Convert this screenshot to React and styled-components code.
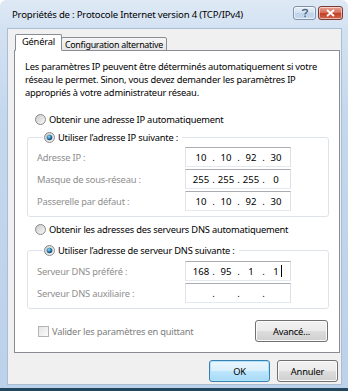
import React from 'react';
import styled, { createGlobalStyle } from 'styled-components';

const GlobalStyle = createGlobalStyle`
  html, body { margin: 0; padding: 0; background: #ffffff; }
  body {
    font-family: "Noto Sans", "DejaVu Sans", sans-serif;
    font-size: 9px;
    letter-spacing: -0.2px;
    color: #000;
  }
  * { box-sizing: border-box; }
`;

const Window = styled.div`
  width: 348px;
  height: 391px;
  display: flex;
  flex-direction: column;
  background: linear-gradient(to bottom, #dfe9f5 0px, #d3e2f2 28px, #c3d7ed 120px, #bcd2ea 100%);
  border-radius: 6px 6px 0 0;
  overflow: hidden;
`;

const TitleBar = styled.div`
  height: 28px;
  flex: none;
  display: flex;
  align-items: center;
  padding: 0 5px 2px 12px;
`;

const Title = styled.div`
  flex: 1;
  font-size: 9.6px;
  color: #000;
  white-space: nowrap;
  padding-top: 3px;
`;

const CaptionButton = styled.div`
  width: ${(p) => p.$w}px;
  height: 14px;
  margin-left: ${(p) => p.$ml || 0}px;
  border: 1px solid ${(p) => (p.$close ? '#7a3a33' : '#7f93ad')};
  border-radius: 3px;
  display: flex;
  align-items: center;
  justify-content: center;
  background: ${(p) =>
    p.$close
      ? 'linear-gradient(to bottom, #e8a294 0%, #d8705d 45%, #c43f27 55%, #d06850 100%)'
      : 'linear-gradient(to bottom, #e8f0f9 0%, #d3e1f1 45%, #bfd2e9 55%, #c9dbee 100%)'};
  box-shadow: inset 0 0 0 1px rgba(255, 255, 255, 0.55);
`;

const Client = styled.div`
  flex: 1;
  margin: 0 6px 0 7px;
  background: #f0f0f0;
  border: 1px solid #a9bdd4;
  display: flex;
  flex-direction: column;
  padding: 4px 1px 0 6px;
`;

const TabRow = styled.div`
  height: 17px;
  display: flex;
  align-items: flex-end;
  position: relative;
  z-index: 1;
  padding-left: 1px;
`;

const Tab = styled.div`
  height: ${(p) => (p.$active ? 17 : 14)}px;
  margin-bottom: -1px;
  padding: 0 ${(p) => (p.$active ? 6 : 3)}px;
  margin-left: ${(p) => (p.$active ? 0 : -1)}px;
  border: 1px solid #898c95;
  border-bottom: ${(p) => (p.$active ? '1px solid #ffffff' : '1px solid #898c95')};
  border-radius: 2px 2px 0 0;
  background: ${(p) => (p.$active ? '#ffffff' : 'linear-gradient(to bottom, #f6f6f6, #e6e6e6)')};
  display: flex;
  align-items: center;
  font-size: ${(p) => (p.$active ? 9.3 : 8.9)}px;
  letter-spacing: ${(p) => (p.$active ? -0.2 : -0.25)}px;
  padding-bottom: ${(p) => (p.$active ? 3 : 0)}px;
  position: relative;
  z-index: ${(p) => (p.$active ? 2 : 1)};
`;

const Panel = styled.div`
  height: 303px;
  background: #ffffff;
  border: 1px solid #898c95;
  padding: 9px 10px 0 10px;
  display: flex;
  flex-direction: column;
`;

const Paragraph = styled.p`
  margin: 0;
  font-size: 9.3px;
  line-height: 13px;
`;

const OptionRow = styled.label`
  display: flex;
  align-items: center;
  gap: 3px;
  height: 14px;
  margin-top: ${(p) => p.$mt || 0}px;
  padding-left: ${(p) => p.$pl || 0}px;
  font-size: 9.3px;
  white-space: nowrap;
`;

const Group = styled.fieldset`
  margin: ${(p) => p.$mt}px 0 0 2px;
  padding: ${(p) => p.$pt}px 0 5px 9px;
  border: 1px solid #dde3e8;
  border-radius: 3px;
  display: flex;
  flex-direction: column;
  gap: 2px;
  min-width: 0;
`;

const Legend = styled.legend`
  margin-left: 6px;
  padding: 0 4px 0 1px;
  height: 14px;
`;

const FieldRow = styled.div`
  display: grid;
  grid-template-columns: 148px 106px;
  align-items: center;
  height: 20px;
`;

const FieldLabel = styled.span`
  color: #8e8e8e;
  font-size: 9.3px;
`;

const IpBox = styled.div`
  height: 20px;
  border: 1px solid;
  border-color: #abadb3 #dbdfe6 #e3e9ef #e2e3ea;
  background: #fff;
  display: flex;
  align-items: center;
  padding-left: 5px;
  font-size: 9.6px;
  letter-spacing: 0;
`;

const Octet = styled.span`
  width: 20px;
  text-align: center;
  position: relative;
`;

const Dot = styled.span`
  width: 5px;
  text-align: center;
`;

const Caret = styled.span`
  position: absolute;
  top: 0px;
  right: 4px;
  width: 1px;
  height: 12px;
  background: #000;
`;

const BottomRow = styled.div`
  display: flex;
  align-items: center;
  justify-content: space-between;
  margin-top: 11px;
  padding: 0 1px 0 13px;
`;

const CheckLabel = styled.span`
  display: flex;
  align-items: center;
  gap: 3px;
  color: #7d7d7d;
  font-size: 9.3px;
`;

const Button = styled.button`
  width: ${(p) => p.$w || 61}px;
  height: 22px;
  padding: 0;
  border: 1px solid ${(p) => (p.$default ? '#3c7fb1' : '#707070')};
  border-radius: 3px;
  background: ${(p) =>
    p.$default
      ? 'linear-gradient(to bottom, #eaf6fd 0%, #d9f0fc 50%, #bee6fd 50%, #a7d9f5 100%)'
      : 'linear-gradient(to bottom, #f2f2f2 0%, #ebebeb 50%, #dddddd 50%, #cfcfcf 100%)'};
  box-shadow: inset 0 0 0 1px ${(p) => (p.$default ? '#a9e4f9' : '#fbfbfb')};
  font-family: "Noto Sans", "DejaVu Sans", sans-serif;
  font-size: 9.3px;
  letter-spacing: -0.2px;
  color: #000;
`;

const DialogButtons = styled.div`
  display: flex;
  justify-content: flex-end;
  gap: 7px;
  margin-top: 7px;
  padding-right: 2px;
`;

const FrameBottom = styled.div`
  height: 3px;
  flex: none;
`;

const Taskbar = styled.div`
  height: 3px;
  flex: none;
  background: #23475e;
`;

function Radio({ checked, id }) {
  return (
    <svg width="11" height="11" viewBox="0 0 11 11">
      <defs>
        <linearGradient id={`rb-${id}`} x1="0" y1="0" x2="1" y2="1">
          <stop offset="0" stopColor="#c9c9c9" />
          <stop offset="1" stopColor="#fafafa" />
        </linearGradient>
        <radialGradient id={`rd-${id}`} cx="0.4" cy="0.35" r="0.7">
          <stop offset="0" stopColor="#8fe0fb" />
          <stop offset="0.5" stopColor="#2f80b4" />
          <stop offset="1" stopColor="#10365a" />
        </radialGradient>
      </defs>
      <circle cx="5.5" cy="5.5" r="5" fill={`url(#rb-${id})`} stroke="#8b8b8b" strokeWidth="1" />
      {checked && <circle cx="5.5" cy="5.5" r="2.8" fill={`url(#rd-${id})`} />}
    </svg>
  );
}

function Checkbox() {
  return (
    <svg width="11" height="11" viewBox="0 0 11 11">
      <defs>
        <linearGradient id="cb" x1="0" y1="0" x2="1" y2="1">
          <stop offset="0" stopColor="#e3e3e3" />
          <stop offset="1" stopColor="#fdfdfd" />
        </linearGradient>
      </defs>
      <rect x="0.5" y="0.5" width="10" height="10" fill="url(#cb)" stroke="#b4b4b4" />
    </svg>
  );
}

function IpField({ value, caret }) {
  const parts = value ? value : ['', '', '', ''];
  return (
    <IpBox>
      {parts.map((p, i) => (
        <React.Fragment key={i}>
          {i > 0 && <Dot>.</Dot>}
          <Octet>
            {p}
            {caret && i === 3 && <Caret />}
          </Octet>
        </React.Fragment>
      ))}
    </IpBox>
  );
}

export default function App() {
  return (
    <>
      <GlobalStyle />
      <Window>
        <TitleBar>
          <Title>Propriétés de : Protocole Internet version 4 (TCP/IPv4)</Title>
          <CaptionButton $w={23}>
            <svg width="8" height="10" viewBox="0 0 8 10">
              <path d="M1.5 3 C1.5 1 6.5 1 6.5 3 C6.5 4.6 4 4.6 4 6.4" fill="none" stroke="#4e6584" strokeWidth="1.4" />
              <rect x="3.3" y="7.6" width="1.5" height="1.5" fill="#4e6584" />
            </svg>
          </CaptionButton>
          <CaptionButton $w={25} $ml={2} $close>
            <svg width="9" height="8" viewBox="0 0 9 8">
              <path d="M1 1 L8 7 M8 1 L1 7" stroke="#ffffff" strokeWidth="1.8" />
            </svg>
          </CaptionButton>
        </TitleBar>
        <Client>
          <TabRow>
            <Tab $active>Général</Tab>
            <Tab>Configuration alternative</Tab>
          </TabRow>
          <Panel>
            <Paragraph>
              Les paramètres IP peuvent être déterminés automatiquement si votre
              <br />
              réseau le permet. Sinon, vous devez demander les paramètres IP
              <br />
              appropriés à votre administrateur réseau.
            </Paragraph>
            <OptionRow $mt={13} $pl={10}>
              <Radio id="a" />
              Obtenir une adresse IP automatiquement
            </OptionRow>
            <Group $mt={4} $pt={3}>
              <Legend>
                <OptionRow>
                  <Radio id="b" checked />
                  Utiliser l’adresse IP suivante :
                </OptionRow>
              </Legend>
              <FieldRow>
                <FieldLabel>Adresse IP :</FieldLabel>
                <IpField value={['10', '10', '92', '30']} />
              </FieldRow>
              <FieldRow>
                <FieldLabel>Masque de sous-réseau :</FieldLabel>
                <IpField value={['255', '255', '255', '0']} />
              </FieldRow>
              <FieldRow>
                <FieldLabel>Passerelle par défaut :</FieldLabel>
                <IpField value={['10', '10', '92', '30']} />
              </FieldRow>
            </Group>
            <OptionRow $mt={5} $pl={10}>
              <Radio id="c" />
              Obtenir les adresses des serveurs DNS automatiquement
            </OptionRow>
            <Group $mt={7} $pt={4}>
              <Legend>
                <OptionRow>
                  <Radio id="d" checked />
                  Utiliser l’adresse de serveur DNS suivante :
                </OptionRow>
              </Legend>
              <FieldRow>
                <FieldLabel>Serveur DNS préféré :</FieldLabel>
                <IpField value={['168', '95', '1', '1']} caret />
              </FieldRow>
              <FieldRow>
                <FieldLabel>Serveur DNS auxiliaire :</FieldLabel>
                <IpField />
              </FieldRow>
            </Group>
            <BottomRow>
              <CheckLabel>
                <Checkbox />
                Valider les paramètres en quittant
              </CheckLabel>
              <Button $w={73}>Avancé...</Button>
            </BottomRow>
          </Panel>
          <DialogButtons>
            <Button $default>OK</Button>
            <Button>Annuler</Button>
          </DialogButtons>
        </Client>
        <FrameBottom />
        <Taskbar />
      </Window>
    </>
  );
}
